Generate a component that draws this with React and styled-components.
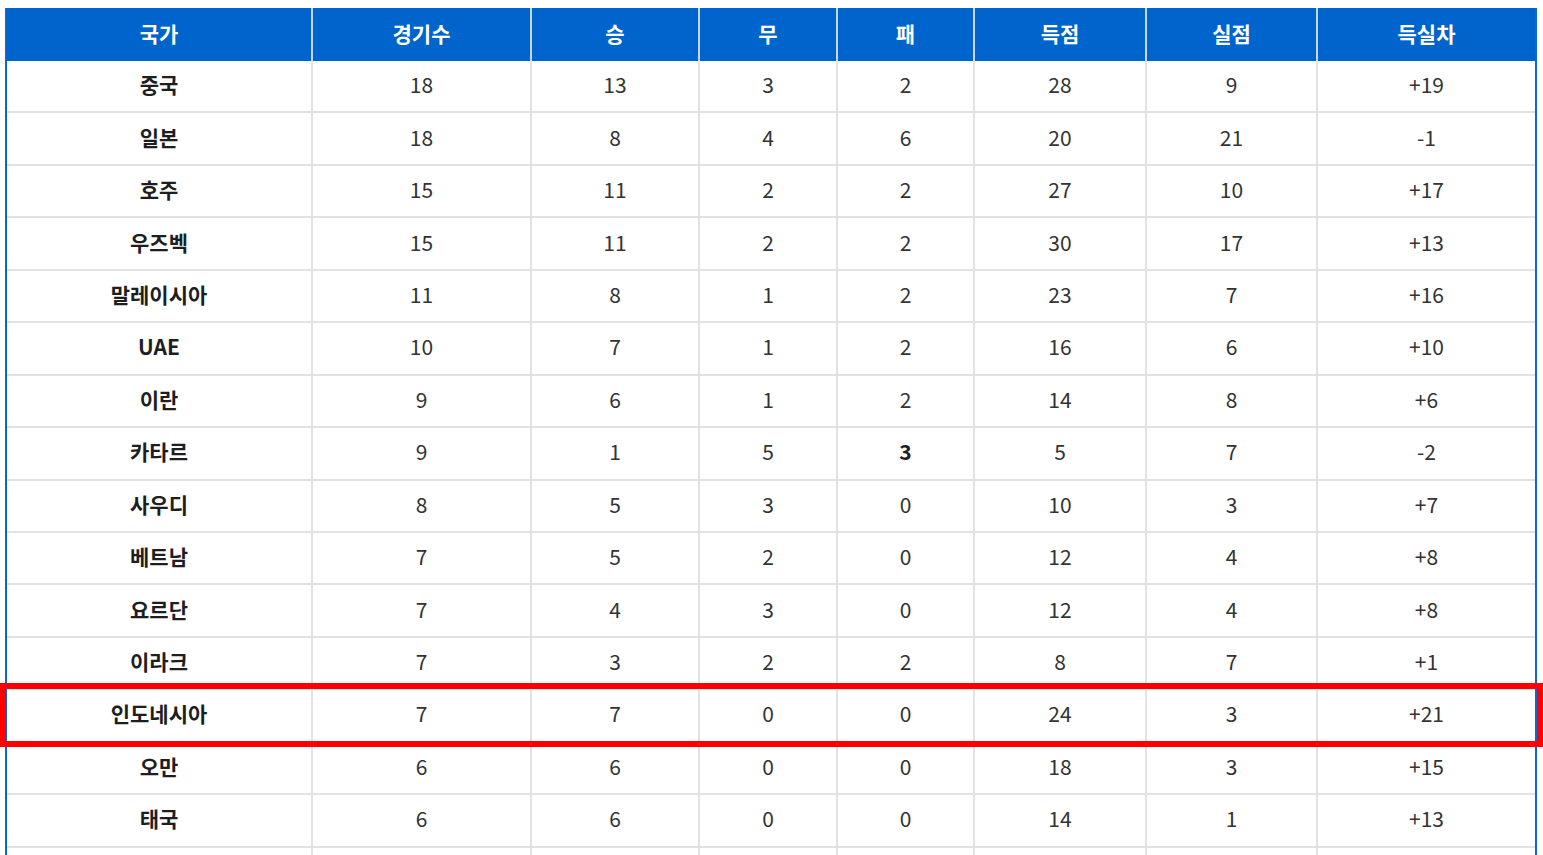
import React from "react";
import styled, { createGlobalStyle } from "styled-components";

const GlobalStyle = createGlobalStyle`
  html, body {
    margin: 0;
    padding: 0;
    background: #ffffff;
  }
  body {
    font-family: "Noto Sans CJK KR", "Noto Sans", sans-serif;
  }
`;

const columns = [
  { label: "국가", width: 306 },
  { label: "경기수", width: 219 },
  { label: "승", width: 168 },
  { label: "무", width: 138 },
  { label: "패", width: 137 },
  { label: "득점", width: 172 },
  { label: "실점", width: 171 },
  { label: "득실차", width: 217 },
];

// country, played, win, draw, loss, gf, ga, diff
const rows = [
  ["중국", 18, 13, 3, 2, 28, 9, "+19"],
  ["일본", 18, 8, 4, 6, 20, 21, "-1"],
  ["호주", 15, 11, 2, 2, 27, 10, "+17"],
  ["우즈벡", 15, 11, 2, 2, 30, 17, "+13"],
  ["말레이시아", 11, 8, 1, 2, 23, 7, "+16"],
  ["UAE", 10, 7, 1, 2, 16, 6, "+10"],
  ["이란", 9, 6, 1, 2, 14, 8, "+6"],
  ["카타르", 9, 1, 5, 3, 5, 7, "-2"],
  ["사우디", 8, 5, 3, 0, 10, 3, "+7"],
  ["베트남", 7, 5, 2, 0, 12, 4, "+8"],
  ["요르단", 7, 4, 3, 0, 12, 4, "+8"],
  ["이라크", 7, 3, 2, 2, 8, 7, "+1"],
  ["인도네시아", 7, 7, 0, 0, 24, 3, "+21"],
  ["오만", 6, 6, 0, 0, 18, 3, "+15"],
  ["태국", 6, 6, 0, 0, 14, 1, "+13"],
];

const HEADER_H = 53;
const ROW_H = 52.45;
const HIGHLIGHT_ROW = 12;

const Page = styled.div`
  padding: 8px 6px 0 5px;
  height: 855px;
  overflow: hidden;
  box-sizing: border-box;
`;

const Frame = styled.div`
  position: relative;
  width: 1532px;
`;

const Table = styled.table`
  width: 1532px;
  border-collapse: separate;
  border-spacing: 0;
  table-layout: fixed;
  border-left: 2px solid #0a66d0;
  border-right: 2px solid #0a66d0;
`;

const HeadCell = styled.th`
  height: ${HEADER_H}px;
  padding: 0 0 3px;
  background: #0064cd;
  color: #ffffff;
  font-size: 21px;
  font-weight: 700;
  text-align: center;
  vertical-align: middle;
  border-right: 2px solid #c9d6ea;
  box-sizing: border-box;

  &:last-child {
    border-right: none;
  }
`;

const Row = styled.tr`
  height: ${ROW_H}px;
`;

const Cell = styled.td`
  padding: 0 0 4px;
  text-align: center;
  vertical-align: middle;
  font-size: 21px;
  font-weight: ${(p) => (p.$strong ? 700 : 400)};
  color: ${(p) => (p.$strong ? "#1e1e1e" : "#333333")};
  border-right: 2px solid #e2e2e2;
  border-bottom: 2px solid #e2e2e2;
  box-sizing: border-box;

  &:last-child {
    border-right: none;
  }
`;

const Highlight = styled.div`
  position: absolute;
  left: -5px;
  right: -6px;
  height: 64px;
  border: 6px solid #ff0000;
  box-sizing: border-box;
  pointer-events: none;
`;

export default function App() {
  return (
    <>
      <GlobalStyle />
      <Page>
        <Frame>
          <Table>
            <colgroup>
              {columns.map((c) => (
                <col key={c.label} style={{ width: c.width }} />
              ))}
            </colgroup>
            <thead>
              <tr>
                {columns.map((c) => (
                  <HeadCell key={c.label}>{c.label}</HeadCell>
                ))}
              </tr>
            </thead>
            <tbody>
              {rows.map((r) => (
                <Row key={r[0]}>
                  {r.map((v, i) => (
                    <Cell
                      key={i}
                      $strong={i === 0 || (r[0] === "카타르" && i === 4)}
                    >
                      {v}
                    </Cell>
                  ))}
                </Row>
              ))}
              {/* next row, scrolled below the visible area */}
              <Row>
                {columns.map((c) => (
                  <Cell key={c.label} />
                ))}
              </Row>
            </tbody>
          </Table>
          <Highlight style={{ top: HEADER_H + HIGHLIGHT_ROW * ROW_H - 7 }} />
        </Frame>
      </Page>
    </>
  );
}
